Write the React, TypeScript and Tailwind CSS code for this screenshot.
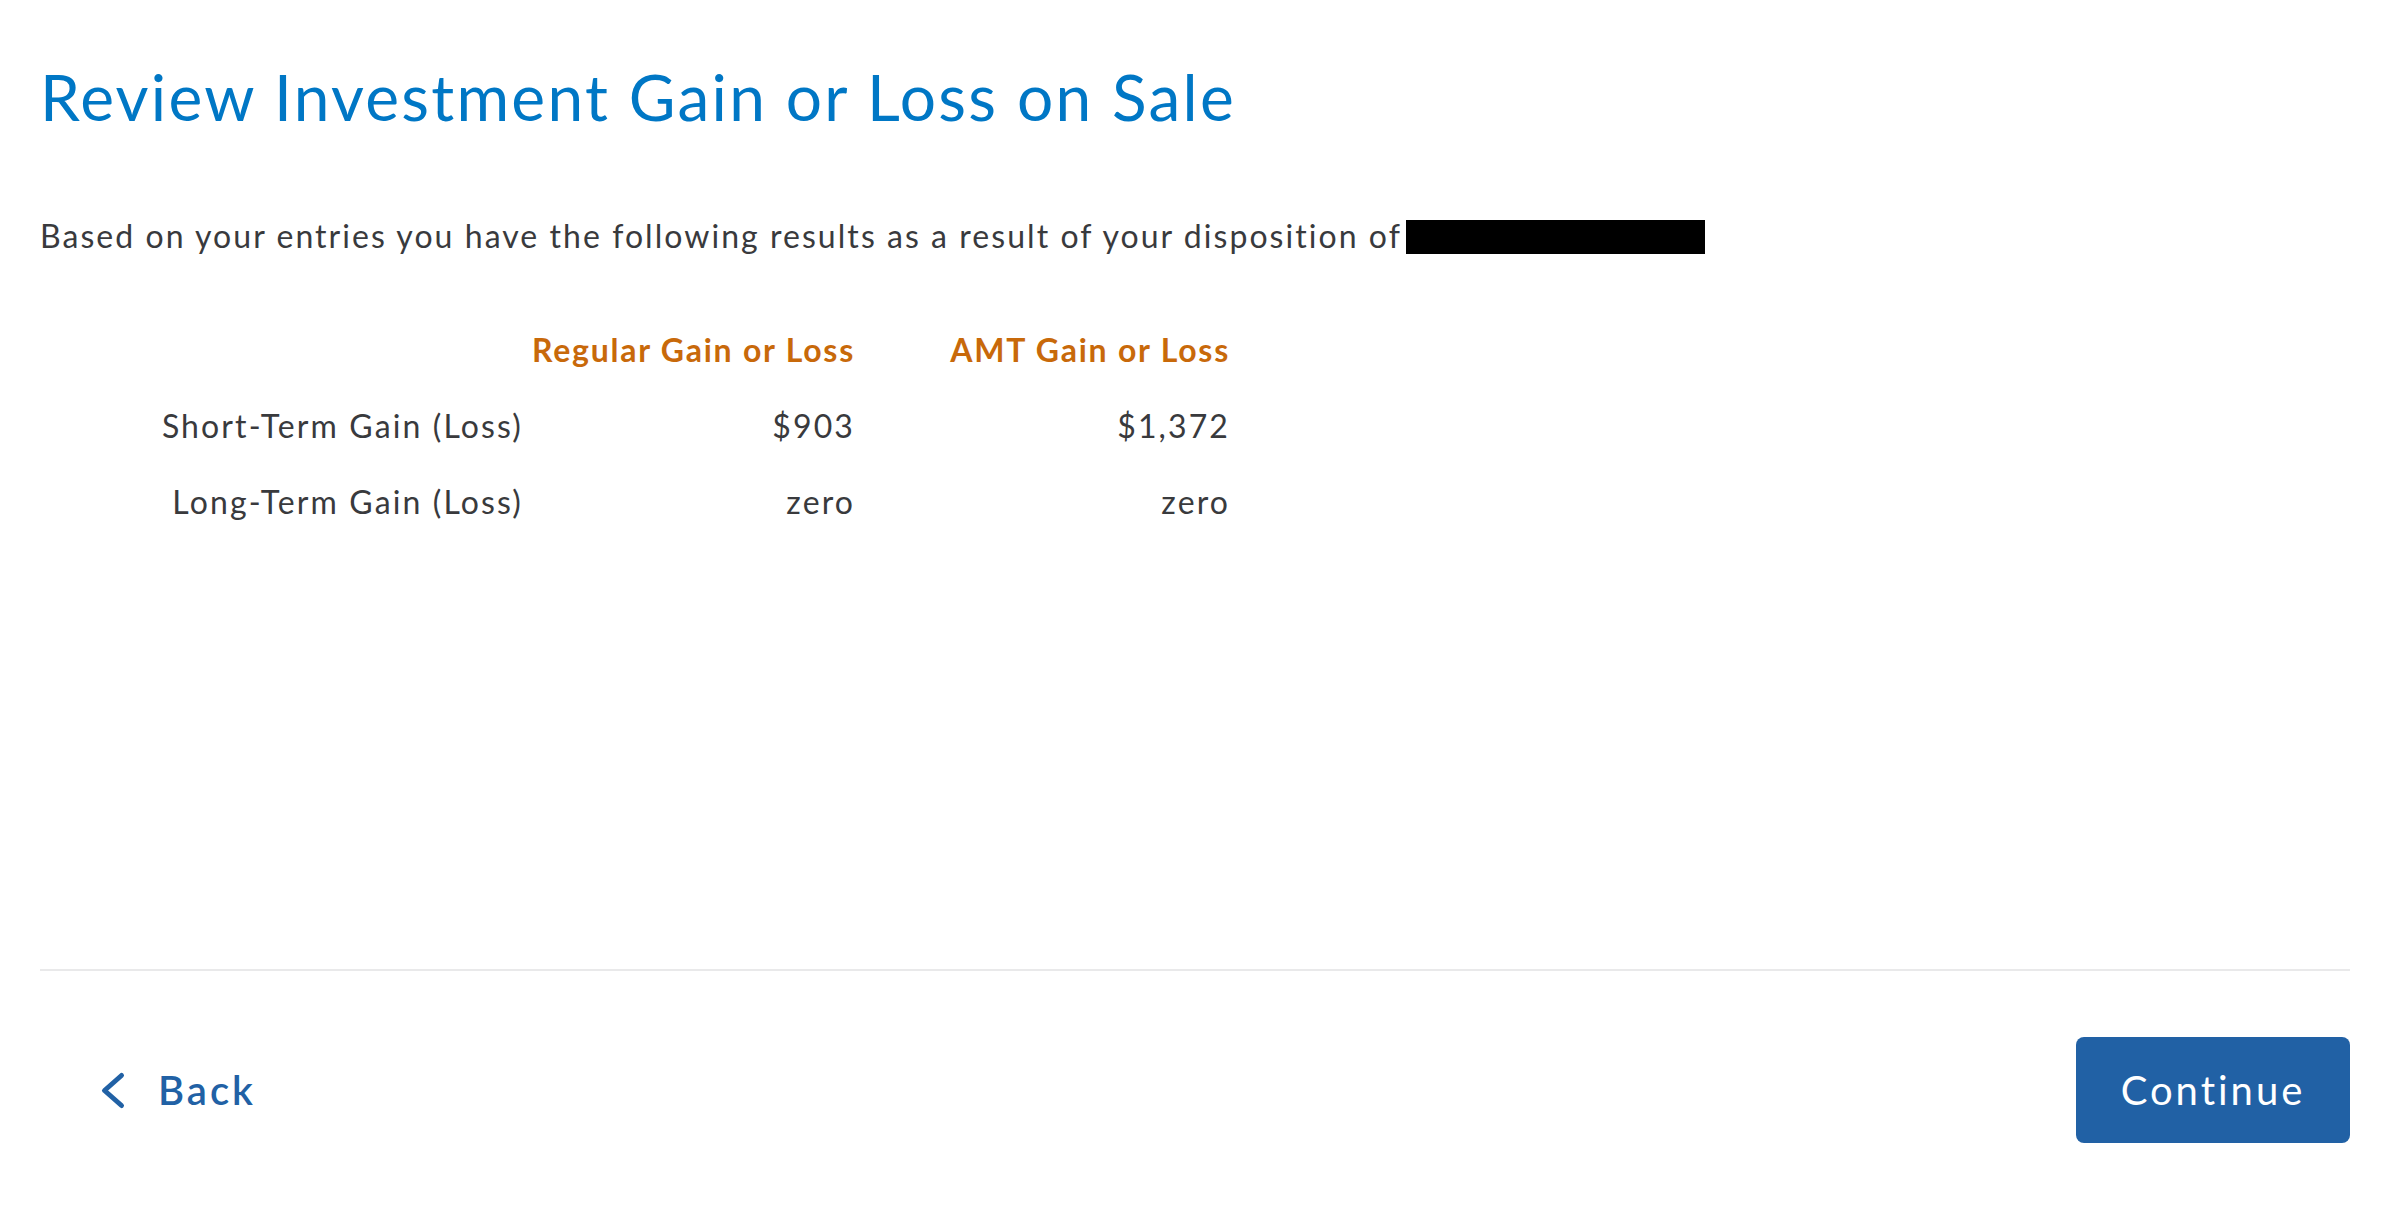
import React from 'react';

const rows = [
  { label: 'Short-Term Gain (Loss)', regular: '$903', amt: '$1,372' },
  { label: 'Long-Term Gain (Loss)', regular: 'zero', amt: 'zero' },
];

export default function App() {
  return (
    <div
      className="min-h-screen bg-white pl-[40px] pr-[54px] pt-[65px] text-[#393a3d]"
      style={{ fontFamily: 'Lato, "Noto Sans", Arial, sans-serif' }}
    >
      {/* Page title */}
      <h1 className="text-[64px] leading-none font-normal tracking-[0.035em] text-[#0077c5]">
        Review Investment Gain or Loss on Sale
      </h1>

      <p className="mt-[83px] text-[32px] leading-[48px] tracking-[0.064em]">
        Based on your entries you have the following results as a result of your disposition of
        <span className="ml-[4px] inline-block h-[34px] w-[299px] bg-black align-[-6px]"></span>
      </p>

      {/* Results table */}
      <div className="ml-[2px] mt-[52px] grid grid-cols-[481px_332px_375px] text-[32px] leading-[76px] tracking-[0.066em]">
        <div></div>
        <div className="text-right font-bold tracking-[0.055em] text-[#c8690a]">Regular Gain or Loss</div>
        <div className="text-right font-bold tracking-[0.055em] text-[#c8690a]">AMT Gain or Loss</div>
        {rows.map((r) => (
          <React.Fragment key={r.label}>
            <div className="text-right">{r.label}</div>
            <div className="text-right">{r.regular}</div>
            <div className="text-right">{r.amt}</div>
          </React.Fragment>
        ))}
      </div>

      <div className="mt-[429px] border-t-2 border-[#e9e9ea]"></div>

      {/* Footer nav */}
      <div className="flex items-center justify-between pt-[66px]">
        <button className="ml-[60px] flex items-center gap-[32px] text-[40px] font-semibold leading-none tracking-[0.075em] text-[#2161a5]">
          <svg width="26" height="45" viewBox="0 0 26 45" fill="none">
            <polyline
              points="21.5,7.5 4.5,22.5 21.5,37.5"
              stroke="#2161a5"
              strokeWidth="5"
              strokeLinecap="round"
              strokeLinejoin="round"
            />
          </svg>
          <span>Back</span>
        </button>
        <button className="flex h-[106px] w-[274px] items-center justify-center rounded-[8px] bg-[#2161a5] text-[40px] leading-none tracking-[0.075em] text-white">
          Continue
        </button>
      </div>
    </div>
  );
}
